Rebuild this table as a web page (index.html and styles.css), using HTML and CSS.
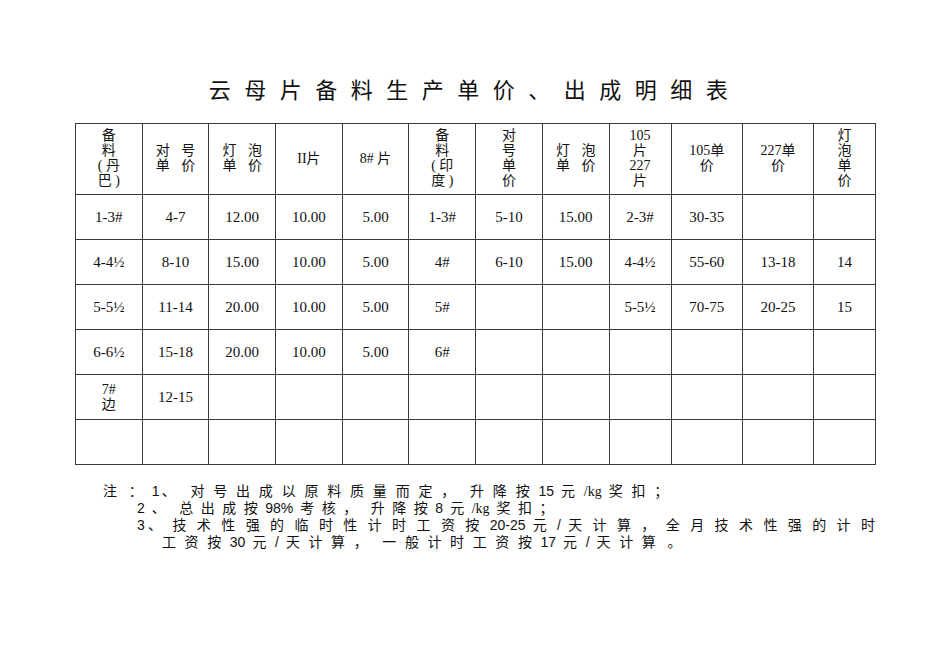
FILE: index.html
```html
<!DOCTYPE html>
<html lang="zh">
<head>
<meta charset="utf-8">
<title>云母片备料生产单价、出成明细表</title>
<link rel="stylesheet" href="styles.css">
</head>
<body>
<div class="page">
  <h1 class="title">云母片备料生产单价、出成明细表</h1>
  <table class="grid">
    <colgroup>
      <col class="c67"><col class="c67"><col class="c67"><col class="c67"><col class="c67"><col class="c67"><col class="c67"><col class="c67"><col class="c62"><col class="c71"><col class="c71"><col class="c62">
    </colgroup>
    <tr class="head">
      <td>备<br>料<br>( 丹<br>巴 )</td>
      <td><span class="sp">对 号</span><br><span class="sp">单 价</span></td>
      <td><span class="sp">灯 泡</span><br><span class="sp">单 价</span></td>
      <td>II片</td>
      <td>8# 片</td>
      <td>备<br>料<br>( 印<br>度 )</td>
      <td>对<br>号<br>单<br>价</td>
      <td><span class="sp">灯 泡</span><br><span class="sp">单 价</span></td>
      <td>105<br>片<br>227<br>片</td>
      <td>105单<br>价</td>
      <td>227单<br>价</td>
      <td>灯<br>泡<br>单<br>价</td>
    </tr>
    <tr>
      <td>1-3#</td><td>4-7</td><td>12.00</td><td>10.00</td><td>5.00</td><td>1-3#</td><td>5-10</td><td>15.00</td><td>2-3#</td><td>30-35</td><td></td><td></td>
    </tr>
    <tr>
      <td>4-4½</td><td>8-10</td><td>15.00</td><td>10.00</td><td>5.00</td><td>4#</td><td>6-10</td><td>15.00</td><td>4-4½</td><td>55-60</td><td>13-18</td><td>14</td>
    </tr>
    <tr>
      <td>5-5½</td><td>11-14</td><td>20.00</td><td>10.00</td><td>5.00</td><td>5#</td><td></td><td></td><td>5-5½</td><td>70-75</td><td>20-25</td><td>15</td>
    </tr>
    <tr>
      <td>6-6½</td><td>15-18</td><td>20.00</td><td>10.00</td><td>5.00</td><td>6#</td><td></td><td></td><td></td><td></td><td></td><td></td>
    </tr>
    <tr>
      <td class="two">7#<br>边</td><td>12-15</td><td></td><td></td><td></td><td></td><td></td><td></td><td></td><td></td><td></td><td></td>
    </tr>
    <tr>
      <td></td><td></td><td></td><td></td><td></td><td></td><td></td><td></td><td></td><td></td><td></td><td></td>
    </tr>
  </table>
  <div class="notes">
    <div class="line l1">注<span class="g"></span>：<span class="n g">1</span>、<span class="g2"></span>对号出成以原料质量而定，<span class="g2"></span>升降按<span class="n">15</span>元<span class="n ser">/kg</span>奖扣；</div>
    <div class="line l2"><span class="n">2</span>、<span class="g2"></span>总出成按<span class="n">98%</span>考核，<span class="g2"></span>升降按<span class="n">8</span>元<span class="n ser">/kg</span>奖扣；</div>
    <div class="line l3"><span class="n">3</span>、 技 术 性 强 的 临 时 性 计 时 工 资 按 <span class="n">20-25</span> 元 / 天 计 算 ， 全 月 技 术 性 强 的 计 时</div>
    <div class="line l4">工资按<span class="n">30</span>元<span class="n">/</span>天计算，<span class="g2"></span>一般计时工资按<span class="n">17</span>元<span class="n">/</span>天计算<span class="g"></span>。</div>
  </div>
</div>
</body>
</html>
```

FILE: styles.css
```css
html, body {
  margin: 0;
  padding: 0;
  background: #ffffff;
}

.page {
  width: 950px;
  height: 672px;
  padding-top: 77px;
  box-sizing: border-box;
  color: #111;
  font-family: "Liberation Serif", "Noto Sans CJK SC", serif;
}

.title {
  margin: 0;
  height: 28px;
  font-family: "Liberation Sans", "Noto Sans CJK SC", sans-serif;
  font-weight: normal;
  font-size: 22px;
  line-height: 28px;
  letter-spacing: 13.5px;
  text-align: center;
  color: #111;
}

.grid {
  margin: 18px 0 0 75px;
  width: 800px;
  border-collapse: collapse;
  table-layout: fixed;
}

.c67 { width: 66.7px; }
.c62 { width: 62px; }
.c71 { width: 71.3px; }

.grid td {
  border: 1px solid #3a3a3a;
  padding: 0;
  height: 44px;
  text-align: center;
  vertical-align: middle;
  font-size: 15px;
  line-height: 17px;
}

.grid .head td {
  height: 68px;
  font-size: 14px;
  line-height: 15px;
  padding-bottom: 2px;
}

.grid td.two {
  font-size: 14px;
  line-height: 15px;
}

.sp {
  word-spacing: 8px;
}

.notes {
  margin-top: 18px;
  font-family: "Liberation Sans", "Noto Sans CJK SC", sans-serif;
  font-size: 14px;
  line-height: 17px;
  letter-spacing: 7.5px;
  color: #111;
}

.line {
  white-space: nowrap;
}

.n {
  letter-spacing: 0;
  margin-right: 7px;
}

.g {
  display: inline-block;
  width: 3px;
}

.g2 {
  display: inline-block;
  width: 6px;
}

.l1 {
  padding-left: 103px;
  letter-spacing: 8.8px;
}
.l2 { padding-left: 137px; }
.l3 {
  padding-left: 137px;
  width: 738px;
  letter-spacing: 0;
  word-spacing: 0;
  text-align: justify;
  text-align-last: justify;
  white-space: normal;
}
.l3 .n { margin-right: 0; }
.l4 {
  padding-left: 162px;
  letter-spacing: 8.6px;
}

.ser {
  font-family: "Liberation Serif", serif;
}
```
